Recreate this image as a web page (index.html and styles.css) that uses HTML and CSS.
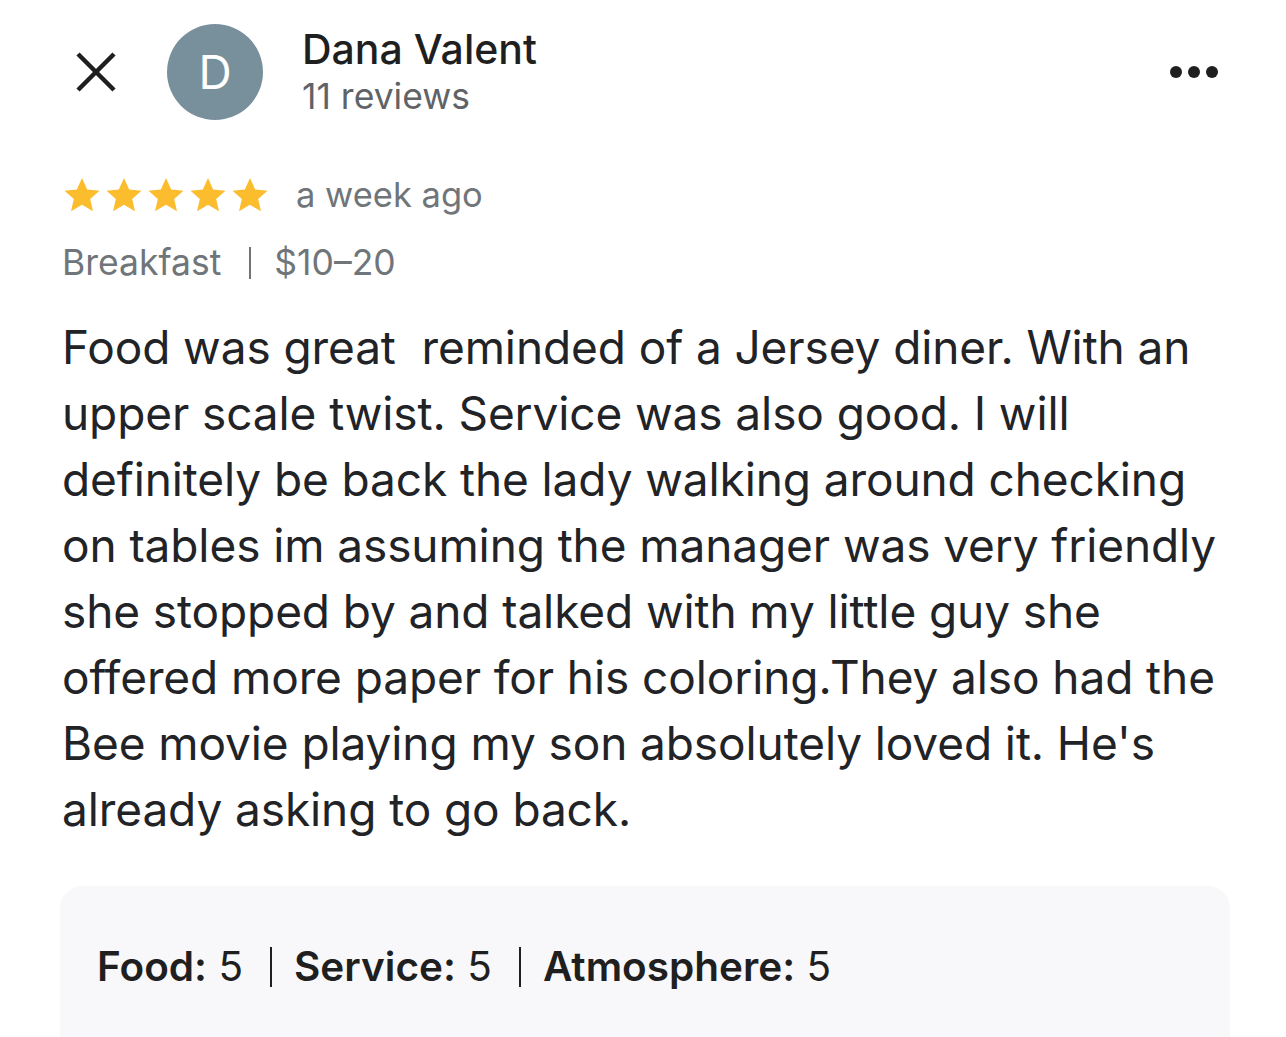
FILE: index.html
```html
<!DOCTYPE html>
<html>
<head>
    <title>Review</title>
    <link rel="stylesheet" href="styles.css">
</head>
<body>
    <div class="review">
        <div class="header">
            <button class="close-btn" aria-label="Close">
                <svg width="42" height="42" viewBox="0 0 42 42">
                    <path d="M3 3 L39 39 M39 3 L3 39" stroke="#1f1f1f" stroke-width="4.5" stroke-linecap="butt"/>
                </svg>
            </button>
            <div class="avatar">D</div>
            <div class="author">
                <div class="name">Dana Valent</div>
                <div class="count">11 reviews</div>
            </div>
            <div class="more">
                <span></span><span></span><span></span>
            </div>
        </div>

        <div class="rating">
            <div class="stars">
                <svg viewBox="0 0 24 24"><path d="M12 1.8l3.1 6.9 7.4.7-5.6 5 1.7 7.4L12 17.9l-6.6 3.9 1.7-7.4-5.6-5 7.4-.7z"/></svg>
                <svg viewBox="0 0 24 24"><path d="M12 1.8l3.1 6.9 7.4.7-5.6 5 1.7 7.4L12 17.9l-6.6 3.9 1.7-7.4-5.6-5 7.4-.7z"/></svg>
                <svg viewBox="0 0 24 24"><path d="M12 1.8l3.1 6.9 7.4.7-5.6 5 1.7 7.4L12 17.9l-6.6 3.9 1.7-7.4-5.6-5 7.4-.7z"/></svg>
                <svg viewBox="0 0 24 24"><path d="M12 1.8l3.1 6.9 7.4.7-5.6 5 1.7 7.4L12 17.9l-6.6 3.9 1.7-7.4-5.6-5 7.4-.7z"/></svg>
                <svg viewBox="0 0 24 24"><path d="M12 1.8l3.1 6.9 7.4.7-5.6 5 1.7 7.4L12 17.9l-6.6 3.9 1.7-7.4-5.6-5 7.4-.7z"/></svg>
            </div>
            <span class="date">a week ago</span>
        </div>

        <div class="meta">
            <span>Breakfast</span>
            <span class="sep"></span>
            <span>$10–20</span>
        </div>

        <p class="text">Food was great&nbsp; reminded of a Jersey diner. With an upper scale twist. Service was also good. I will definitely be back the lady walking around checking on tables im assuming the manager was very friendly she stopped by and talked with my little guy she offered more paper for his coloring.They also had the Bee movie playing my son absolutely loved it. He's already asking to go back.</p>

        <div class="scores">
            <span><b>Food:</b> 5</span>
            <span class="sep"></span>
            <span><b>Service:</b> 5</span>
            <span class="sep"></span>
            <span><b>Atmosphere:</b> 5</span>
        </div>
    </div>
</body>
</html>
```

FILE: styles.css
```css
/* General */
body {
    margin: 0;
    padding: 0;
    background: #ffffff;
    font-family: Inter, "Liberation Sans", sans-serif;
    color: #1f1f1f;
}

.review {
    padding: 0 57px 0 62px;
}

/* Header */
.header {
    display: flex;
    align-items: center;
    padding-top: 24px;
    height: 96px;
}

.close-btn {
    background: none;
    border: none;
    padding: 0;
    margin-left: 13px;
    width: 42px;
    height: 42px;
    display: flex;
}

.avatar {
    width: 96px;
    height: 96px;
    border-radius: 50%;
    background: #78909c;
    color: #ffffff;
    font-size: 46px;
    display: flex;
    align-items: center;
    justify-content: center;
    margin-left: 50px;
}

.author {
    margin-left: 39px;
    align-self: flex-start;
    margin-top: 0;
}

.name {
    font-size: 41px;
    font-weight: 500;
    line-height: 50px;
    color: #1f1f1f;
}

.count {
    font-size: 35.5px;
    line-height: 46px;
    color: #5f6368;
}

.more {
    margin-left: auto;
    display: flex;
    gap: 6px;
    margin-right: 11px;
}

.more span {
    width: 12px;
    height: 12px;
    border-radius: 50%;
    background: #1f1f1f;
}

/* Rating */
.rating {
    display: flex;
    align-items: center;
    margin-top: 54px;
}

.stars {
    display: flex;
    gap: 2px;
}

.stars svg {
    width: 40px;
    height: 40px;
    fill: #fbbc2e;
}

.date {
    font-size: 34.5px;
    color: #70757a;
    margin-left: 26px;
}

.meta {
    display: flex;
    align-items: center;
    margin-top: 26px;
    font-size: 35.5px;
    color: #70757a;
}

.sep {
    width: 2px;
    height: 32px;
    background: currentColor;
    margin: 0 23px 0 28px;
}

/* Body text */
.text {
    font-size: 46px;
    line-height: 66px;
    margin: 30px 0 0 0;
    color: #222326;
    letter-spacing: -0.1px;
}

/* Scores box */
.scores {
    display: flex;
    align-items: center;
    background: #f8f8fa;
    border-radius: 22px 22px 0 0;
    margin: 44px -1px 0 -2px;
    padding: 56px 37px 58px;
    font-size: 40.5px;
    color: #1f1f1f;
}

.scores b {
    font-weight: 600;
}

.scores .sep {
    height: 40px;
    background: #1f1f1f;
    margin: 0 22px 0 27px;
}
```
